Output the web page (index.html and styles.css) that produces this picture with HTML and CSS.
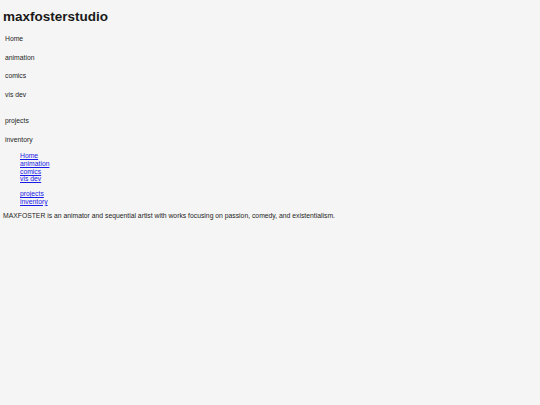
FILE: index.html
```html
<!DOCTYPE html>
<html lang="en">
<head>
  <meta charset="UTF-8">
  <meta name="viewport" content="width=device-width, initial-scale=1.0">
  <title>maxfosterstudio</title>
  <link rel="stylesheet" href="styles.css">
</head>
<body>
  <header class="site-header">
    <h1 class="logo">maxfosterstudio</h1>
    <nav class="main-nav">
      <div class="nav-group">
        <p class="nav-item">Home</p>
        <p class="nav-item">animation</p>
        <p class="nav-item">comics</p>
        <p class="nav-item">vis dev</p>
      </div>
      <div class="nav-group">
        <p class="nav-item">projects</p>
        <p class="nav-item">inventory</p>
      </div>
    </nav>
  </header>

  <div class="link-list">
    <ul>
      <li><a href="#">Home</a></li>
      <li><a href="#">animation</a></li>
      <li><a href="#">comics</a></li>
      <li><a href="#">vis dev</a></li>
    </ul>
    <ul>
      <li><a href="#">projects</a></li>
      <li><a href="#">inventory</a></li>
    </ul>
  </div>

  <p class="bio">MAXFOSTER is an animator and sequential artist with works focusing on passion, comedy, and existentialism.</p>
</body>
</html>
```

FILE: styles.css
```css
body {
  font-family: "Liberation Sans", Arial, sans-serif;
  background-color: #f5f5f5;
  color: #1e1e1e;
  margin: 0;
  padding: 3px 3px;
  font-size: 6.8px;
}

.logo {
  font-size: 13.5px;
  font-weight: bold;
  margin: 5px 0 0 0;
  line-height: 17px;
  color: #1a1a1a;
}

.main-nav {
  padding-left: 2px;
  margin-top: 5px;
}

.nav-group {
  margin-bottom: 7px;
}

.nav-group:last-child {
  margin-bottom: 3px;
}

.nav-item {
  margin: 0;
  line-height: 18.7px;
}

.link-list {
  padding-left: 17px;
}

.link-list ul {
  list-style: none;
  margin: 0 0 7px 0;
  padding: 0;
}

.link-list li {
  line-height: 7.7px;
}

.link-list a {
  color: #1a1ae6;
}

.bio {
  margin: 0;
}
```
